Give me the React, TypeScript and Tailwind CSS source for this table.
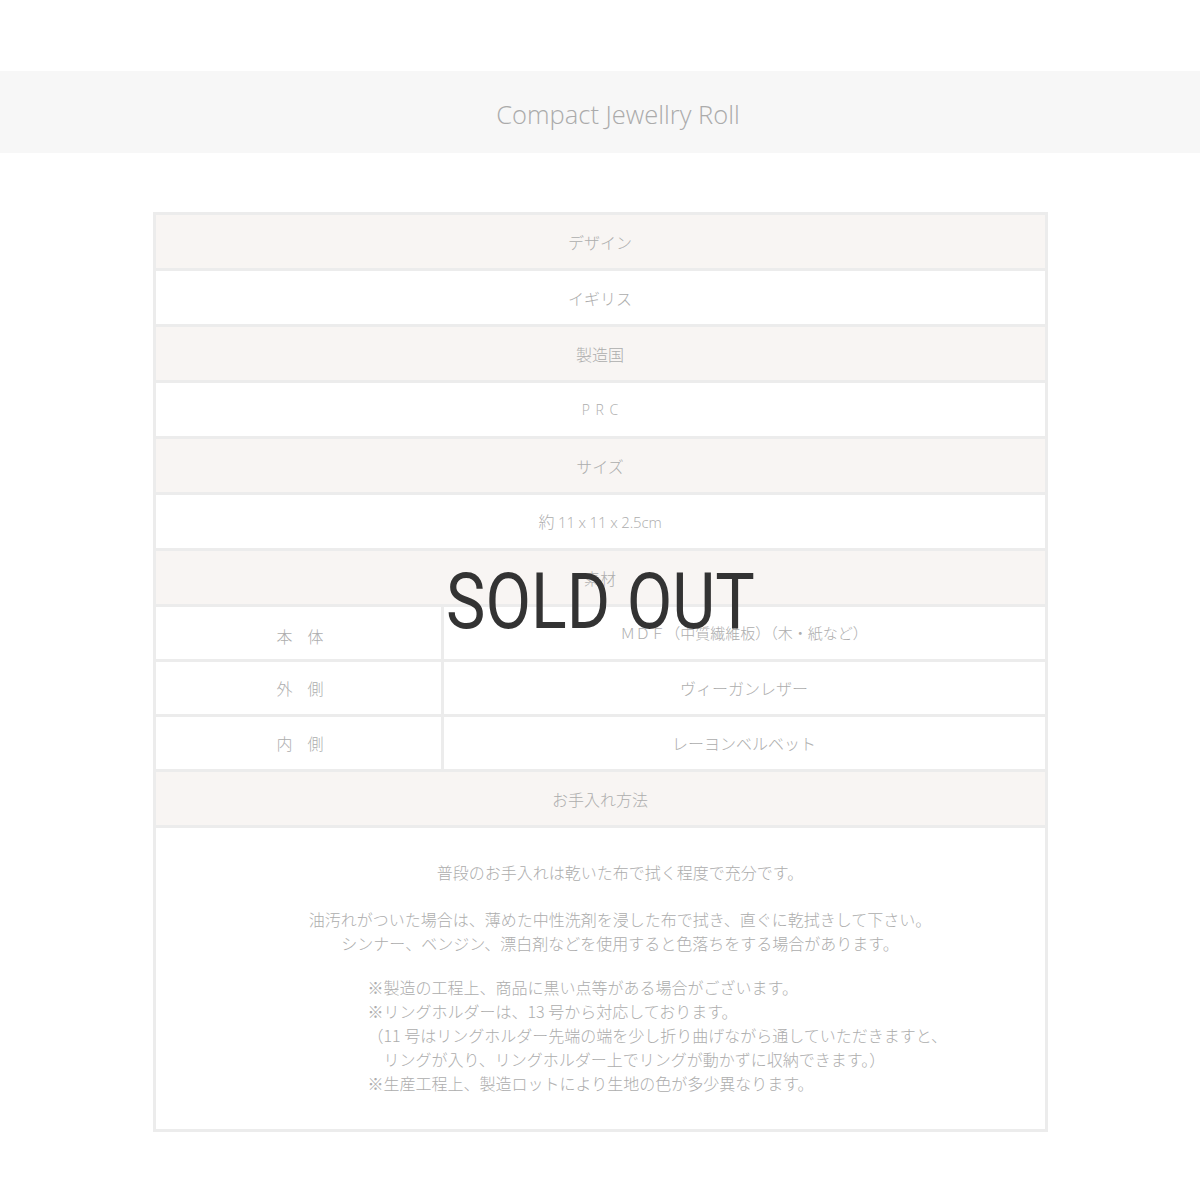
const jp = "font-['Noto_Sans_CJK_JP','Noto_Sans',sans-serif]"

const HeadRow = ({ label }: { label: string }) => (
  <div className="h-[56px] bg-[#f8f5f3] border-b-[3px] border-[#ececec] flex items-center justify-center text-[16px] text-[#adadad] font-light">
    {label}
  </div>
)

const ValueRow = ({ children }: { children: React.ReactNode }) => (
  <div className="h-[56px] bg-white border-b-[3px] border-[#ececec] flex items-center justify-center text-[16px] text-[#adadad] font-light">
    {children}
  </div>
)

const SubRow = ({ label, value, small, low }: { label: string; value: string; small?: boolean; low?: boolean }) => (
  <div className="h-[55px] bg-white border-b-[3px] border-[#ececec] flex text-[16px] text-[#adadad] font-light">
    <div className={`w-[288px] border-r-[3px] border-[#ececec] flex items-center justify-center tracking-[0.95em] pl-[1.2em] ${low ? 'pt-[6px]' : ''}`}>
      {label}
    </div>
    <div className={`flex-1 flex items-center justify-center ${small ? 'text-[15px]' : ''}`}>{value}</div>
  </div>
)

export default function App() {
  return (
    <div className={`w-[1200px] h-[1200px] bg-white ${jp}`}>
      <div className="h-[71px]" />
      {/* title band */}
      <div className="h-[82px] bg-[#f7f7f7] flex items-center justify-center pl-[36px]">
        <h1 className="font-['Open_Sans',sans-serif] text-[25.5px] font-light text-[#ababab] pt-[4px]">
          Compact Jewellry Roll
        </h1>
      </div>

      <div className="relative mt-[59px] mx-auto w-[895px] border-x-[3px] border-t-[3px] border-[#ececec]">
        <HeadRow label="デザイン" />
        <ValueRow>イギリス</ValueRow>
        <HeadRow label="製造国" />
        <ValueRow>
          <span className="tracking-[0.4em] pl-[0.4em] font-['Open_Sans',sans-serif] text-[14px]">PRC</span>
        </ValueRow>
        <HeadRow label="サイズ" />
        <ValueRow>
          <span>
            約 <span className="font-['Open_Sans',sans-serif] text-[15px] tracking-[-0.01em]">11 x 11 x 2.5cm</span>
          </span>
        </ValueRow>
        <HeadRow label="素材" />
        <SubRow label="本体" value="ＭＤＦ（中質繊維板）（木・紙など）" small low />
        <SubRow label="外側" value="ヴィーガンレザー" />
        <SubRow label="内側" value="レーヨンベルベット" />
        <HeadRow label="お手入れ方法" />

        {/* care text */}
        <div className="bg-white border-b-[3px] border-[#ececec] pt-[32px] pb-[34px] text-[16px] leading-[24px] text-[#adadad] font-light">
          <div className="pl-[40px]">
            <p className="text-center">普段のお手入れは乾いた布で拭く程度で充分です。</p>
            <p className="text-center mt-[23px]">
              油汚れがついた場合は、薄めた中性洗剤を浸した布で拭き、直ぐに乾拭きして下さい。
              <br />
              シンナー、ベンジン、漂白剤などを使用すると色落ちをする場合があります。
            </p>
          </div>
          <div className="mt-[20px] pl-[212px]">
            <p>※製造の工程上、商品に黒い点等がある場合がございます。</p>
            <p>※リングホルダーは、13 号から対応しております。</p>
            <p>（11 号はリングホルダー先端の端を少し折り曲げながら通していただきますと、</p>
            <p>　リングが入り、リングホルダー上でリングが動かずに収納できます。）</p>
            <p>※生産工程上、製造ロットにより生地の色が多少異なります。</p>
          </div>
        </div>

        {/* sold out overlay */}
        <div className="absolute left-0 right-0 top-[348px] flex justify-center pointer-events-none">
          <span className="font-['Roboto',sans-serif] text-[78px] leading-none text-[#333333] scale-x-[0.85] pl-[2px]">
            SOLD OUT
          </span>
        </div>
      </div>
    </div>
  )
}
